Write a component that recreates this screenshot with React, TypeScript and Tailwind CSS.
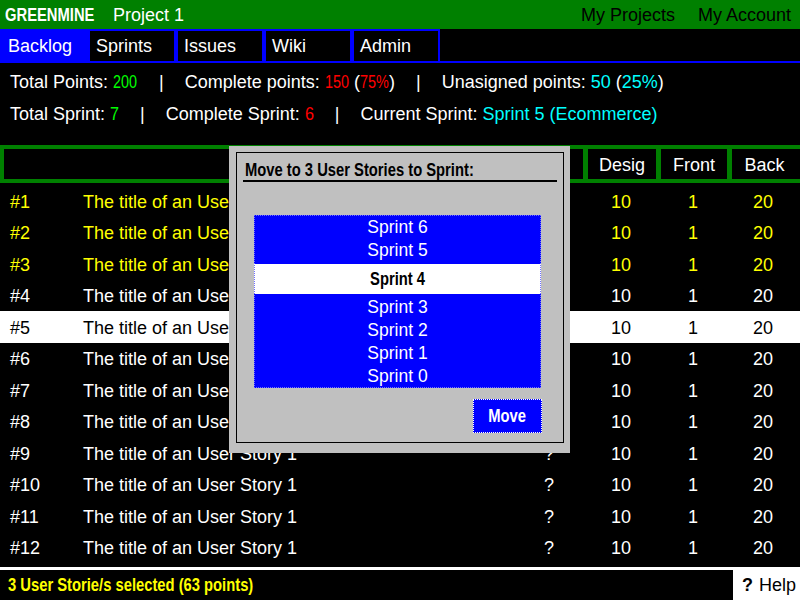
const tabs = ['Backlog', 'Sprints', 'Issues', 'Wiki', 'Admin']
const rows = Array.from({ length: 12 }, (_, i) => i + 1)
const sprints = ['Sprint 6', 'Sprint 5', 'Sprint 4', 'Sprint 3', 'Sprint 2', 'Sprint 1', 'Sprint 0']

// the bold face in the shot is a narrow one; squeeze regular bold to match
const squeeze = 'inline-block whitespace-nowrap font-bold scale-x-[0.82]'

function Sep() {
  return <span className="mx-[21px]">|</span>
}

function Stats() {
  return (
    <div className="flex h-[82px] flex-none flex-col pl-[10px] pt-[3px]">
      <div className="flex h-[32px] items-center whitespace-pre">
        <span>Total Points: </span>
        <span className="mr-[-6px] inline-block origin-left scale-x-[0.8] text-[#00ff00]">200</span>
        <span className="ml-[1px]" />
        <Sep />
        <span>Complete points: </span>
        <span className="mr-[-6px] inline-block origin-left scale-x-[0.8] text-[#ff0000]">150</span>
        <span> (</span>
        <span className="mr-[-7px] inline-block origin-left scale-x-[0.8] text-[#ff0000]">75%</span>
        <span>)</span>
        <Sep />
        <span>Unasigned points: </span>
        <span className="text-[#00ffff]">50</span>
        <span> (</span>
        <span className="text-[#00ffff]">25%</span>
        <span>)</span>
      </div>
      <div className="flex h-[32px] items-center whitespace-pre">
        <span>Total Sprint: </span>
        <span className="mr-[-1px] inline-block origin-left scale-x-[0.9] text-[#00ff00]">7</span>
        <Sep />
        <span>Complete Sprint: </span>
        <span className="mr-[-1px] inline-block origin-left scale-x-[0.9] text-[#ff0000]">6</span>
        <Sep />
        <span>Current Sprint: </span>
        <span className="text-[#00ffff]">Sprint 5 (Ecommerce)</span>
      </div>
    </div>
  )
}

function StoryRow({ n }: Readonly<{ n: number }>) {
  let tone = 'text-white'
  if (n <= 3) tone = 'text-[#ffff00]'
  if (n === 5) tone = 'bg-white text-black'
  return (
    <div className={`grid h-[31.5px] grid-cols-[83px_433px_66px_78px_66px_1fr] items-center pt-[2px] ${tone}`}>
      <span className="pl-[10px]">#{n}</span>
      <span>The title of an User Story 1</span>
      <span className="text-center">?</span>
      <span className="text-center">10</span>
      <span className="text-center">1</span>
      <span className="text-center">20</span>
    </div>
  )
}

function MoveDialog() {
  return (
    <div className="absolute left-[229px] top-[146px] h-[307px] w-[341px] bg-[#c0c0c0] pb-[10px] pl-[7px] pr-[6px] pt-[6px]">
      <div className="h-full border border-black px-[6px] pt-[7px]">
        <div className="h-[22px] border-b-2 border-black pl-[2px] leading-[20px] text-black">
          <span className={`${squeeze} origin-left`}>Move to 3 User Stories to Sprint:</span>
        </div>
        <div className="ml-[11px] mt-[33px] h-[173px] w-[287px] bg-[#0000ff] pt-[1px] outline-1 -outline-offset-1 outline-dotted outline-[#7070ff]">
          {sprints.map((s) =>
            s === 'Sprint 4' ? (
              <div key={s} className="my-[2px] flex h-[30px] items-center justify-center bg-white text-black">
                <span className={`${squeeze} origin-center`}>{s}</span>
              </div>
            ) : (
              <div key={s} className="flex h-[23px] items-center justify-center text-[17.5px] text-white">
                {s}
              </div>
            ),
          )}
        </div>
        <div className="ml-[230px] mt-[11px] flex h-[34px] w-[69px] items-center justify-center border border-dotted border-white bg-[#0000ff] text-white">
          <span className={`${squeeze} origin-center`}>Move</span>
        </div>
      </div>
    </div>
  )
}

export default function App() {
  return (
    <div className="relative flex h-screen w-full flex-col overflow-hidden bg-black font-['Liberation_Sans',Arial,sans-serif] text-[18px] leading-none text-white">
      <div className="flex h-[29px] flex-none items-center bg-[#008000] pl-[5px] pr-[9px] pt-[1px]">
        <span className="w-[89px]">
          <span className={`${squeeze} origin-left`}>GREENMINE</span>
        </span>
        <span className="ml-[19px]">Project 1</span>
        <span className="ml-auto text-black">My Projects</span>
        <span className="ml-[23px] text-black">My Account</span>
      </div>

      <div className="flex h-[34px] flex-none border-b-2 border-[#0000ff]">
        {tabs.map((t) => (
          <div
            key={t}
            className={`flex w-[88px] items-center border-2 border-b-0 border-[#0000ff] pl-[6px] ${t === 'Backlog' ? 'bg-[#0000ff]' : ''}`}
          >
            {t}
          </div>
        ))}
      </div>

      <Stats />

      <div className="flex h-[38px] flex-none gap-[5px] bg-[#008000] py-[4px] pl-[4px]">
        <div className="w-[508px] bg-black" />
        <div className="w-[66px] bg-black" />
        <div className="flex w-[68px] items-center justify-center bg-black pt-[1px]">Desig</div>
        <div className="flex w-[66px] items-center justify-center bg-black pt-[1px]">Front</div>
        <div className="flex flex-1 items-center justify-center bg-black pr-[3px] pt-[1px]">Back</div>
      </div>

      <div className="mt-[2px] flex flex-col">
        {rows.map((n) => (
          <StoryRow key={n} n={n} />
        ))}
      </div>

      <div className="mt-auto flex h-[33px] flex-none items-end bg-white">
        <div className="flex h-[30px] w-[733px] items-center bg-black pl-[8px] text-[#ffff00]">
          <span className={`${squeeze} origin-left`}>3 User Storie/s selected (63 points)</span>
        </div>
        <div className="flex h-[30px] items-center pl-[9px] text-black">
          <span className="font-bold">?</span>
          <span className="ml-[6px]">Help</span>
        </div>
      </div>

      <MoveDialog />
    </div>
  )
}
